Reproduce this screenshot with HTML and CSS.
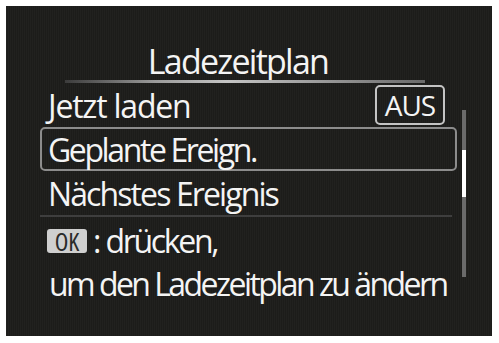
FILE: index.html
```html
<!DOCTYPE html>
<html lang="de">
<head>
<meta charset="utf-8">
<title>Ladezeitplan</title>
<link rel="stylesheet" href="styles.css">
</head>
<body>
<div class="screen">
  <div class="title">Ladezeitplan</div>
  <div class="title-rule"></div>
  <div class="menu">
    <div class="row">
      <span class="label l-now">Jetzt laden</span>
      <span class="value">AUS</span>
    </div>
    <div class="row selected">
      <span class="label l-plan">Geplante Ereign.</span>
    </div>
    <div class="row">
      <span class="label l-next">Nächstes Ereignis</span>
    </div>
  </div>
  <div class="rule"></div>
  <div class="help">
    <div class="help-line"><span class="ok">OK</span><span class="colon">:</span><span class="press">drücken,</span></div>
    <div class="help-line indent">um den Ladezeitplan zu ändern</div>
  </div>
  <div class="scrollbar"><div class="thumb"></div></div>
</div>
</body>
</html>
```
FILE: styles.css
```css
html, body {
  margin: 0;
  padding: 0;
  background: #ffffff;
}

body {
  padding: 6px;
  font-family: "Open Sans", "DejaVu Sans", sans-serif;
  color: #f4f4f4;
}

.screen {
  position: relative;
  width: 486px;
  height: 330px;
  box-sizing: border-box;
  background-color: #1c1c1a;
  background-image: repeating-linear-gradient(90deg, rgba(255,255,255,0.025) 0 1px, rgba(0,0,0,0) 1px 2px);
  display: flex;
  flex-direction: column;
  padding-top: 36px;
}

.title {
  height: 38px;
  line-height: 38px;
  font-size: 34px;
  letter-spacing: -1.75px;
  text-align: center;
  padding-right: 22px;
  white-space: nowrap;
}

.title-rule {
  height: 3px;
  margin-left: 59px;
  width: 360px;
  background: linear-gradient(90deg, #3c3c3c 0%, #9a9a9a 25%, #c4c4c4 45%, #9c9c9c 70%, #6a6a6a 100%);
}

.menu {
  display: flex;
  flex-direction: column;
  margin-left: 34px;
  width: 417px;
}

.row {
  height: 44px;
  box-sizing: border-box;
  display: flex;
  align-items: center;
  justify-content: space-between;
  padding: 0 10px 0 6px;
  font-size: 32px;
  border: 2px solid transparent;
  border-radius: 5px;
  white-space: nowrap;
}

.row.selected {
  border-color: #8c8c8c;
}

.l-now { letter-spacing: -1.2px; }
.l-plan { letter-spacing: -2.4px; }
.l-next { letter-spacing: -1.9px; }

.value {
  width: 70px;
  height: 40px;
  box-sizing: border-box;
  border: 2px solid #c4c4c4;
  border-radius: 5px;
  display: flex;
  align-items: center;
  justify-content: center;
  font-size: 28px;
  letter-spacing: -1px;
}

.rule {
  height: 2px;
  margin-left: 34px;
  width: 412px;
  background: #3e3e3e;
}

.help {
  margin-left: 41px;
  font-size: 32px;
}

.help-line {
  height: 43px;
  line-height: 43px;
  display: flex;
  align-items: center;
  white-space: nowrap;
}

.help-line:first-child {
  margin-top: 2px;
}

.ok {
  display: inline-block;
  width: 40px;
  height: 24px;
  line-height: 24px;
  background: #cfcfcf;
  border-radius: 3px;
  color: #2a2a2a;
  font-size: 25px;
  font-stretch: 75%;
  text-align: center;
}

.colon {
  margin: 0 4px 0 6px;
}

.press {
  letter-spacing: -2.3px;
}

.indent {
  padding-left: 2px;
  letter-spacing: -2.55px;
}

.scrollbar {
  position: absolute;
  left: 456px;
  top: 104px;
  width: 4px;
  height: 167px;
  background: #6a6a6a;
}

.thumb {
  margin-top: 40px;
  height: 47px;
  background: #ffffff;
}
```
